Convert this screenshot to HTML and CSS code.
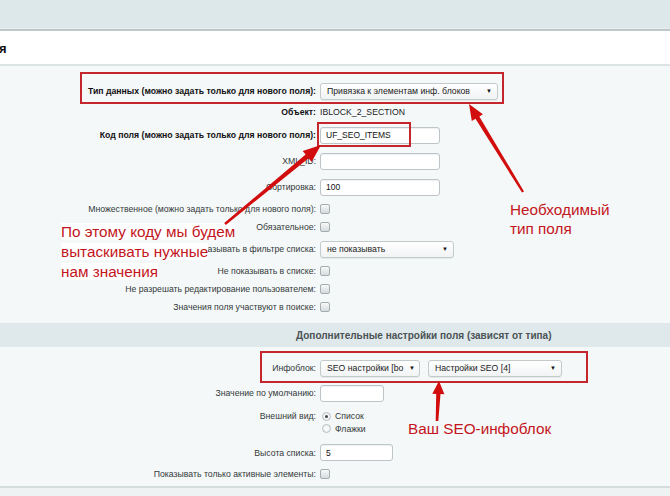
FILE: index.html
```html
<!DOCTYPE html>
<html lang="ru">
<head>
<meta charset="utf-8">
<title>Поле</title>
<link rel="stylesheet" href="styles.css">
</head>
<body>
<div class="topband"></div>
<div class="tabbar"><span class="tabtitle">я</span></div>

<div class="form">
  <div class="row h22"><div class="lbl b">Тип данных (можно задать только для нового поля):</div><div class="ctl"><div class="select s-type"><span>Привязка к элементам инф. блоков</span><span class="arr">▼</span></div></div></div>
  <div class="row h20"><div class="lbl b">Объект:</div><div class="ctl val">IBLOCK_2_SECTION</div></div>
  <div class="row h26"><div class="lbl b">Код поля (можно задать только для нового поля):</div><div class="ctl"><div class="input w120">UF_SEO_ITEMS</div></div></div>
  <div class="row h26"><div class="lbl">XML_ID:</div><div class="ctl"><div class="input w120"></div></div></div>
  <div class="row h26"><div class="lbl">Сортировка:</div><div class="ctl"><div class="input w120">100</div></div></div>
  <div class="row h18"><div class="lbl">Множественное (можно задать только для нового поля):</div><div class="ctl"><span class="cb"></span></div></div>
  <div class="row h18"><div class="lbl">Обязательное:</div><div class="ctl"><span class="cb"></span></div></div>
  <div class="row h26"><div class="lbl">Показывать в фильтре списка:</div><div class="ctl"><div class="select s-filter"><span>не показывать</span><span class="arr">▼</span></div></div></div>
  <div class="row h18"><div class="lbl">Не показывать в списке:</div><div class="ctl"><span class="cb"></span></div></div>
  <div class="row h17"><div class="lbl">Не разрешать редактирование пользователем:</div><div class="ctl"><span class="cb"></span></div></div>
  <div class="row h19"><div class="lbl">Значения поля участвуют в поиске:</div><div class="ctl"><span class="cb"></span></div></div>

  <div class="section">Дополнительные настройки поля (зависят от типа)</div>

  <div class="row h24 first"><div class="lbl">Инфоблок:</div><div class="ctl pair"><div class="select s-ib1"><span class="clip">SEO настройки [bo</span><span class="arr">▼</span></div><div class="select s-ib2"><span>Настройки SEO [4]</span><span class="arr">▼</span></div></div></div>
  <div class="row h26"><div class="lbl">Значение по умолчанию:</div><div class="ctl"><div class="input w64"></div></div></div>
  <div class="row h32 top"><div class="lbl">Внешний вид:</div><div class="ctl radios"><div class="ropt"><span class="rb on"></span>Список</div><div class="ropt"><span class="rb"></span>Флажки</div></div></div>
  <div class="row h29"><div class="lbl">Высота списка:</div><div class="ctl"><div class="input w73">5</div></div></div>
  <div class="row h14"><div class="lbl">Показывать только активные элементы:</div><div class="ctl"><span class="cb"></span></div></div>
</div>
<div class="footer"></div>

<div class="overlay">
  <div class="redbox box-type"></div>
  <div class="redbox box-code"></div>
  <div class="redbox box-ib"></div>
  <div class="note note-code"><span>По этому коду мы будем<br>вытаскивать нужные<br>нам значения</span></div>
  <div class="note note-type">Необходимый<br>тип поля</div>
  <div class="note note-seo">Ваш SEO-инфоблок</div>
  <svg class="arrows" width="670" height="496" viewBox="0 0 670 496">
    <polygon points="469,104 482.9,114.3 479.3,116.5 524,191.4 522,192.6 475.5,118.8 471.8,121.1"/>
    <polygon points="321,145 311.6,161.9 308.6,158.3 225.8,224.9 224.2,223.1 305.6,154.6 302.7,151.1"/>
    <polygon points="439,381 444.4,394.3 440.5,394.1 438.3,421 435.7,421 436.2,393.9 432.3,393.7"/>
  </svg>
</div>
</body>
</html>
```
FILE: styles.css
```css
* { box-sizing: border-box; }
html, body { margin: 0; padding: 0; }
body {
  width: 670px;
  height: 496px;
  overflow: hidden;
  position: relative;
  background: #f5f8f9;
  font-family: "Liberation Sans", Arial, sans-serif;
  color: #333;
}
.topband {
  height: 29px;
  background: #dde8ea;
  border-bottom: 1px solid #e9eff0;
}
.tabbar {
  height: 37px;
  background: #fff;
  border-top: 2px solid #bec8cb;
  border-bottom: 2px solid #dbe3e5;
  display: flex;
  align-items: center;
}
.tabtitle {
  font-size: 13px;
  font-weight: bold;
  color: #111;
  margin-left: -1px;
  padding-top: 2px;
}
.form {
  padding-top: 14px;
  display: flex;
  flex-direction: column;
}
.row {
  display: grid;
  grid-template-columns: 316px 1fr;
  column-gap: 4px;
  align-items: center;
  font-size: 8.7px;
}
.row.top { align-items: start; padding-top: 4px; }
.h14 { height: 14px; }
.h17 { height: 17px; }
.h18 { height: 18px; }
.h19 { height: 19px; }
.h20 { height: 20px; }
.h22 { height: 22px; }
.h24 { height: 24px; }
.h26 { height: 26px; }
.h29 { height: 29px; }
.h32 { height: 32px; }
.row.first { margin-top: 9px; }
.lbl {
  text-align: right;
  white-space: nowrap;
  color: #33383a;
  line-height: 12px;
}
.lbl.b { font-weight: bold; color: #111; }
.ctl { display: flex; align-items: center; }
.val { color: #222; font-size: 8.7px; }
.select {
  height: 17px;
  border: 1px solid #c3cacc;
  border-radius: 3px;
  background: linear-gradient(#ffffff, #f1f3f4);
  display: flex;
  align-items: center;
  justify-content: space-between;
  padding: 0 5px 0 6px;
  color: #222;
  font-size: 8.7px;
  white-space: nowrap;
  overflow: hidden;
  box-shadow: 0 1px 0 #e4e9ea;
}
.select .arr { font-size: 6px; color: #111; }
.s-type { width: 178px; }
.s-filter { width: 134px; }
.pair { gap: 8px; }
.s-ib1 { width: 100px; padding-right: 4px; }
.s-ib1 .clip { overflow: hidden; width: 78px; }
.s-ib2 { width: 134px; }
.input {
  height: 17px;
  border: 1px solid #bdc5c8;
  border-radius: 3px;
  background: #fff;
  padding-left: 5px;
  display: flex;
  align-items: center;
  color: #111;
  font-size: 8.5px;
  box-shadow: inset 0 1px 1px #eef1f2;
}
.w120 { width: 120px; }
.w64 { width: 64px; }
.w73 { width: 73px; }
.cb {
  display: inline-block;
  width: 10px;
  height: 10px;
  border: 1px solid #a4adb0;
  border-radius: 2px;
  background: linear-gradient(#f8f9f9, #d6dbdd);
}
.radios { flex-direction: column; align-items: flex-start; }
.ropt {
  height: 12.5px;
  display: flex;
  align-items: center;
  gap: 4px;
  padding-left: 2px;
  color: #33383a;
}
.rb {
  width: 9px;
  height: 9px;
  border-radius: 50%;
  border: 1px solid #b8bfc2;
  background: radial-gradient(circle, #f7f8f8 40%, #dde1e3);
  position: relative;
}
.rb.on::after {
  content: "";
  position: absolute;
  left: 2px;
  top: 2px;
  width: 3px;
  height: 3px;
  border-radius: 50%;
  background: #444;
}
.section {
  margin-top: 7px;
  height: 24px;
  background: #dfe8ea;
  display: flex;
  align-items: center;
  padding-left: 296px;
  font-size: 10px;
  font-weight: bold;
  color: #4a5356;
}
.footer {
  margin-top: 5px;
  height: 20px;
  border-top: 2px solid #d4dcde;
  background: #eef2f3;
}
.overlay {
  position: absolute;
  left: 0;
  top: 0;
  width: 670px;
  height: 496px;
  pointer-events: none;
}
.redbox {
  position: absolute;
  border: 2px solid #c5262b;
}
.box-type { left: 80px; top: 72px; width: 424px; height: 32px; }
.box-code { left: 317px; top: 122px; width: 94px; height: 25px; }
.box-ib { left: 260px; top: 351px; width: 328px; height: 32px; }
.note {
  position: absolute;
  font-family: "Liberation Sans", Arial, sans-serif;
  font-size: 15.3px;
  color: #c3161c;
  white-space: nowrap;
}
.note-code { left: 61px; top: 222px; line-height: 20px; }
.note-code span { background: #fff; }
.note-type { left: 510px; top: 200px; line-height: 19px; }
.note-seo { left: 408px; top: 420px; line-height: 18px; }
.arrows { position: absolute; left: 0; top: 0; }
.arrows polygon { fill: #d10d0d; }
```
